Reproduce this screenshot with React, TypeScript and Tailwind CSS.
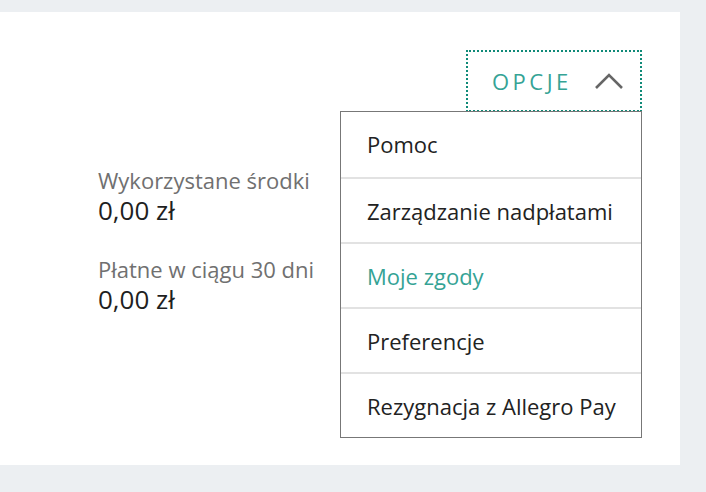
const menuItems = [
  { label: 'Pomoc', active: false },
  { label: 'Zarządzanie nadpłatami', active: false },
  { label: 'Moje zgody', active: true },
  { label: 'Preferencje', active: false },
  { label: 'Rezygnacja z Allegro Pay', active: false },
];

const stats = [
  { label: 'Wykorzystane środki', value: '0,00 zł' },
  { label: 'Płatne w ciągu 30 dni', value: '0,00 zł' },
];

export default function App() {
  return (
    <div
      className="min-h-screen bg-[#eceff2] pt-3 pr-[26px] pb-[27px]"
      style={{ fontFamily: '"Open Sans", "Noto Sans", sans-serif' }}
    >
      <div className="bg-white h-[453px]">
        {/* Options button + dropdown */}
        <div className="flex justify-end pr-[38px] pt-[38px]">
          <div className="relative">
            <button className="w-[176px] h-[62px] border-2 border-dotted border-[#0f8a78] flex items-center pl-[24px] pr-[16px]">
              <span className="text-[22px] leading-none tracking-[3.5px] text-[#35a395]">OPCJE</span>
              <svg className="ml-auto" width="30" height="18" viewBox="0 0 30 18" fill="none">
                <path d="M2 16 L15 3 L28 16" stroke="#666" strokeWidth="2.6" />
              </svg>
            </button>
            <ul className="absolute top-full right-0 -mt-[1px] w-[302px] bg-white border border-[#777]">
              {menuItems.map((item, i) => (
                <li
                  key={item.label}
                  className={`h-[65px] flex items-center pl-[26px] text-[22px] ${
                    i > 0 ? 'border-t-2 border-[#e2e2e2] pt-[1px]' : 'pb-[1px]'
                  } ${item.active ? 'text-[#35a395]' : 'text-[#222]'}`}
                >
                  {item.label}
                </li>
              ))}
            </ul>
          </div>
        </div>

        {/* Summary */}
        <div className="pl-[98px] mt-[54px] flex flex-col gap-[29px]">
          {stats.map((s) => (
            <div key={s.label}>
              <div className="text-[22px] leading-[28px] text-[#707070]">{s.label}</div>
              <div className="text-[26px] leading-[32px] text-[#1f1f1f]">{s.value}</div>
            </div>
          ))}
        </div>
      </div>
    </div>
  );
}
